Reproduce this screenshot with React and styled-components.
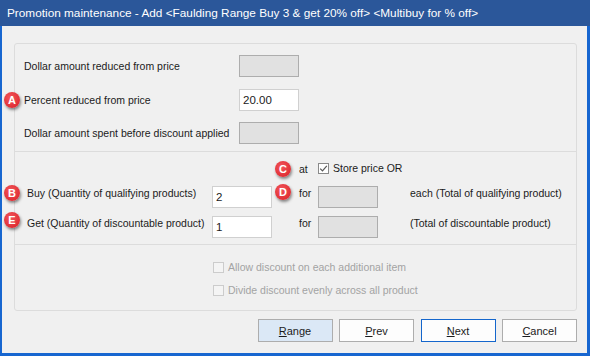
import React from 'react'
import { styled, createGlobalStyle } from 'styled-components'

const GlobalStyle = createGlobalStyle`
html, body {
  margin: 0;
  padding: 0;
  background: #f0f0f0;
}
body {
  font-family: "Liberation Sans", Arial, sans-serif;
}
`;

const Check = ({ checked, disabled, children }) => (
  <CheckRow $disabled={disabled}>
    <CheckBox $disabled={disabled}>
      {checked && (
        <svg width="9" height="9" viewBox="0 0 9 9">
          <path d="M1.2 4.6 L3.5 6.9 L7.8 1.8" fill="none" stroke="#5a5a5a" strokeWidth="1.2" />
        </svg>
      )}
    </CheckBox>
    <span>{children}</span>
  </CheckRow>
)

const App = () => {
  return (
    <Window>
      <GlobalStyle />
      <TitleBar>Promotion maintenance - Add &lt;Faulding Range Buy 3 &amp; get 20% off&gt; &lt;Multibuy for % off&gt;</TitleBar>
      <Frame>
        <GroupBox>
          <AmountSection>
            <Label>Dollar amount reduced from price</Label>
            <TextBox disabled />
            <Label>
              <Badge $left={-20} $top={-2}>A</Badge>
              Percent reduced from price
            </Label>
            <TextBox defaultValue="20.00" />
            <Label>Dollar amount spent before discount applied</Label>
            <TextBox disabled />
          </AmountSection>

          <QuantitySection>
            <Cell $col={4}>
              <Badge $left={-24} $top={0}>C</Badge>
              at
            </Cell>
            <Cell $col="5 / 8">
              <Check checked>Store price OR</Check>
            </Cell>

            <Cell $col={1} $pad>
              <Badge $left={-23} $top={-1}>B</Badge>
              Buy (Quantity of qualifying products)
            </Cell>
            <QtyBox defaultValue="2" />
            <Cell $col={4} $pad>
              <Badge $left={-24} $top={-2}>D</Badge>
              for
            </Cell>
            <QtyBox $col={5} disabled />
            <Cell $col={7} $pad>each (Total of qualifying product)</Cell>

            <Cell $col={1} $pad>
              <Badge $left={-23} $top={-4}>E</Badge>
              Get (Quantity of discountable product)
            </Cell>
            <QtyBox defaultValue="1" />
            <Cell $col={4} $pad>for</Cell>
            <QtyBox $col={5} disabled />
            <Cell $col={7} $pad>(Total of discountable product)</Cell>
          </QuantitySection>

          <OptionSection>
            <Check disabled>Allow discount on each additional item</Check>
            <Check disabled>Divide discount evenly across all product</Check>
          </OptionSection>
        </GroupBox>

        <ButtonBar>
          <Button $variant="hover"><u>R</u>ange</Button>
          <Button><u>P</u>rev</Button>
          <Button $variant="default"><u>N</u>ext</Button>
          <Button><u>C</u>ancel</Button>
        </ButtonBar>
      </Frame>
    </Window>
  )
}

export default App

const Window = styled.div`
width: 590px;
height: 356px;
display: flex;
flex-direction: column;
background: #f0f0f0;
overflow: hidden;
`;

const TitleBar = styled.div`
height: 26px;
flex: none;
background: #2b579a;
color: #ffffff;
font-size: 11.8px;
line-height: 27px;
padding-left: 7px;
white-space: nowrap;
`;

const Frame = styled.div`
flex: 1;
display: flex;
flex-direction: column;
border-left: 2px solid #1766d0;
border-right: 3px solid #1766d0;
border-bottom: 3px solid #1766d0;
padding: 17px 10px 0 12px;
`;

const GroupBox = styled.div`
height: 268px;
box-sizing: border-box;
border: 1px solid #dcdcdc;
border-radius: 3px;
display: flex;
flex-direction: column;
`;

const AmountSection = styled.div`
height: 108px;
box-sizing: border-box;
border-bottom: 1px solid #dcdcdc;
padding: 11px 0 0 9px;
display: grid;
grid-template-columns: 215px 60px;
grid-auto-rows: 22px;
row-gap: 11.5px;
align-items: center;
`;

const Label = styled.div`
position: relative;
font-size: 10.5px;
line-height: 12px;
color: #1b1b1b;
white-space: nowrap;
`;

const TextBox = styled.input.attrs({ type: 'text', readOnly: true })`
width: 60px;
height: 22px;
box-sizing: border-box;
margin: 0;
padding: 0 3px;
font-family: inherit;
font-size: 11.5px;
color: #1b1b1b;
background: ${p => (p.disabled ? '#e1e1e1' : '#ffffff')};
border: 1px solid ${p => (p.disabled ? '#adadad' : '#d0d0d0')};
outline: none;
`;

const QuantitySection = styled.div`
height: 93px;
box-sizing: border-box;
border-bottom: 1px solid #dcdcdc;
padding: 9px 0 0 12px;
display: grid;
grid-template-columns: 185px 60px 27px 19px 60px 32px auto;
grid-template-rows: 16px 22px 22px;
row-gap: 8.5px;
align-items: start;
`;

const Cell = styled.div`
grid-column: ${p => p.$col};
position: relative;
font-size: 10.5px;
line-height: 13px;
color: #1b1b1b;
white-space: nowrap;
padding-top: ${p => (p.$pad ? '1px' : '2px')};
`;

const QtyBox = styled(TextBox)`
grid-column: ${p => p.$col || 2};
`;

const OptionSection = styled.div`
flex: 1;
padding: 17px 0 0 198px;
display: flex;
flex-direction: column;
gap: 12px;
`;

const CheckRow = styled.label`
display: flex;
align-items: center;
gap: 4px;
font-size: 10.5px;
line-height: 11px;
color: ${p => (p.$disabled ? '#a3a3a3' : '#1b1b1b')};
white-space: nowrap;
`;

const CheckBox = styled.span`
width: 11px;
height: 11px;
box-sizing: border-box;
flex: none;
display: flex;
align-items: center;
justify-content: center;
background: ${p => (p.$disabled ? '#f4f4f4' : '#ffffff')};
border: 1px solid ${p => (p.$disabled ? '#cccccc' : '#8a8a8a')};
`;

const Badge = styled.span`
position: absolute;
left: ${p => p.$left}px;
top: ${p => p.$top}px;
width: 16px;
height: 16px;
border-radius: 50%;
background: radial-gradient(circle at 40% 35%, #f2555a, #e02f35 70%);
box-shadow: 1px 2px 3px rgba(0, 0, 0, 0.45);
color: #ffffff;
font-family: "Liberation Sans", Arial, sans-serif;
font-weight: bold;
font-size: 11px;
line-height: 16px;
text-align: center;
`;

const ButtonBar = styled.div`
display: flex;
justify-content: flex-end;
gap: 6.5px;
margin-top: 8px;
`;

const Button = styled.button`
width: 75px;
height: 23px;
box-sizing: border-box;
margin: 0;
padding: 0;
font-family: inherit;
font-size: 11px;
color: #1b1b1b;
background: ${p => (p.$variant === 'hover' ? '#dbe8f6' : '#fdfdfd')};
border: 1px solid ${p => (p.$variant === 'default' ? '#1466cc' : '#adadad')};
u {
  text-decoration: underline;
}
`;
